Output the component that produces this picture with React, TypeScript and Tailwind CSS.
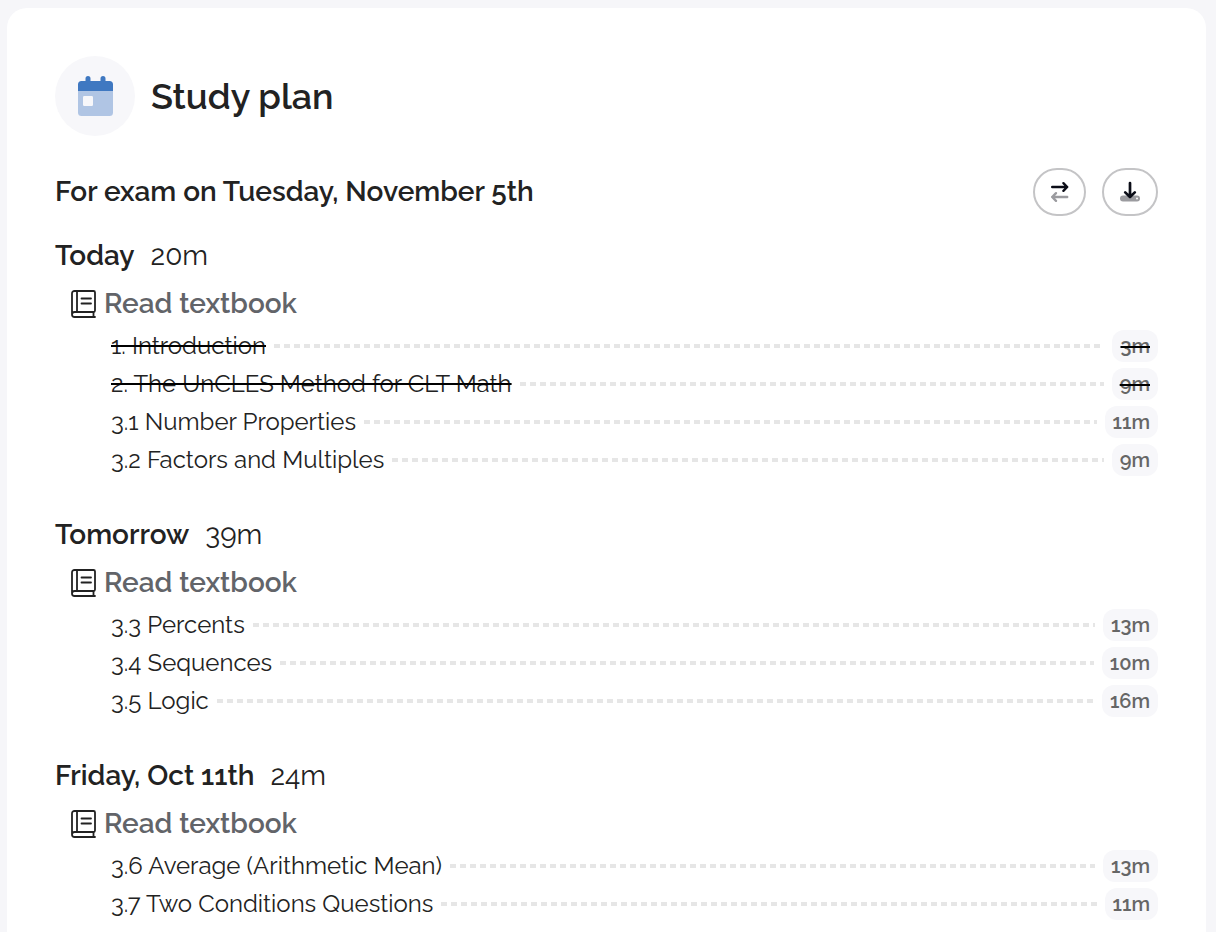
type Task = {
  name: string;
  time: string;
  done?: boolean;
};

type Day = {
  label: string;
  total: string;
  tasks: Task[];
};

const days: Day[] = [
  {
    label: "Today",
    total: "20m",
    tasks: [
      { name: "1. Introduction", time: "3m", done: true },
      { name: "2. The UnCLES Method for CLT Math", time: "9m", done: true },
      { name: "3.1 Number Properties", time: "11m" },
      { name: "3.2 Factors and Multiples", time: "9m" },
    ],
  },
  {
    label: "Tomorrow",
    total: "39m",
    tasks: [
      { name: "3.3 Percents", time: "13m" },
      { name: "3.4 Sequences", time: "10m" },
      { name: "3.5 Logic", time: "16m" },
    ],
  },
  {
    label: "Friday, Oct 11th",
    total: "24m",
    tasks: [
      { name: "3.6 Average (Arithmetic Mean)", time: "13m" },
      { name: "3.7 Two Conditions Questions", time: "11m" },
    ],
  },
];

function CalendarIcon() {
  return (
    <svg width="36" height="40" viewBox="-1 0 36 40" aria-hidden="true">
      <path d="M0 15h35v21.5a3.5 3.5 0 0 1-3.5 3.5h-28A3.5 3.5 0 0 1 0 36.5z" fill="#b0c5e4" />
      <path
        d="M10 0a2.5 2.5 0 0 1 2.5 2.5V5h10V2.5a2.5 2.5 0 0 1 5 0V5h4A3.5 3.5 0 0 1 35 8.5V15H0V8.5A3.5 3.5 0 0 1 3.5 5h4V2.5A2.5 2.5 0 0 1 10 0z"
        fill="#3f78c1"
      />
      <rect x="5" y="20" width="10" height="10" rx="1.2" fill="#f7f7fa" />
    </svg>
  );
}

function SwapIcon() {
  return (
    <svg
      width="20"
      height="22"
      viewBox="0 0 20 22"
      fill="none"
      strokeWidth="2.4"
      strokeLinecap="round"
      strokeLinejoin="round"
      aria-hidden="true"
    >
      <path d="M6 12.2L2.2 16 6 19.8M2.2 16h15" stroke="#9b9b9f" />
      <path d="M2.2 6h15M13.4 2.2L17.2 6l-3.8 3.8" stroke="#0b0d17" />
    </svg>
  );
}

function DownloadIcon() {
  return (
    <svg width="20" height="22" viewBox="0 0 20 22" fill="none" aria-hidden="true">
      <path d="M3 14.5h14a3 3 0 0 1 0 6H3a3 3 0 0 1 0-6z" fill="#9b9b9f" />
      <circle cx="17" cy="17.5" r="1" fill="#fff" />
      <path
        d="M10 2v14M5.2 11.4L10 16l4.8-4.6"
        stroke="#0b0d17"
        strokeWidth="2.7"
        strokeLinecap="round"
        strokeLinejoin="round"
      />
    </svg>
  );
}

function BookIcon() {
  return (
    <svg
      width="25"
      height="28"
      viewBox="0 0 25 28"
      fill="none"
      stroke="#222"
      strokeWidth="1.8"
      strokeLinecap="round"
      strokeLinejoin="round"
      aria-hidden="true"
    >
      <path d="M1 24.5v-21A2.5 2.5 0 0 1 3.500 1h19A1.500 1.500 0 0 1 24 2.500v18a1.500 1.500 0 0 1-1.500 1.500h-19a2.500 2.500 0 0 0 0 5H24" />
      <path d="M6 1v21M22.5 22v5M10.5 8.500H20M10.5 13.500H20" />
    </svg>
  );
}

function TaskRow({ task }: { task: Task }) {
  return (
    <li className="flex h-[38px] items-center gap-2">
      <span
        className={
          task.done
            ? "text-2xl line-through decoration-black decoration-2"
            : "text-2xl"
        }
      >
        {task.name}
      </span>
      <span className="h-1 flex-1 bg-[repeating-linear-gradient(to_right,#e6e6e6_0_6px,transparent_6px_10px)]" />
      <span className="flex h-8 items-center rounded-xl bg-[#f7f7fa] px-2 text-xl font-semibold text-[#666]">
        <span
          className={
            task.done ? "line-through decoration-black decoration-2" : ""
          }
        >
          {task.time}
        </span>
      </span>
    </li>
  );
}

function DaySection({ day }: { day: Day }) {
  return (
    <section>
      <h3 className="flex h-12 items-center gap-4 text-[28px]">
        <span className="font-semibold">{day.label}</span>
        <span>{day.total}</span>
      </h3>
      <h4 className="flex h-12 items-center gap-2 pl-4 text-[28px] font-semibold text-[#626469]">
        <BookIcon />
        Read textbook
      </h4>
      <ul className="-mt-px pl-14">
        {day.tasks.map((task) => (
          <TaskRow key={task.name} task={task} />
        ))}
      </ul>
    </section>
  );
}

export default function App() {
  return (
    <div className="min-h-screen bg-[#f6f6f9] pt-2 pr-[10px] pl-[7px] font-[Raleway,sans-serif] text-[#222]">
      <main className="rounded-t-[20px] bg-white p-12">
        <header className="flex items-center gap-4">
          <div className="flex size-20 items-center justify-center rounded-full bg-[#f7f7fa]">
            <CalendarIcon />
          </div>
          <h1 className="text-4xl font-semibold">Study plan</h1>
        </header>

        <div className="mt-8 mb-4 flex h-12 items-center justify-between">
          <h2 className="text-[28px] font-semibold">
            For exam on Tuesday, November 5th
          </h2>
          <div className="flex gap-4">
            <button
              type="button"
              aria-label="Reschedule"
              className="flex h-12 w-[53px] items-center justify-center rounded-3xl border-2 border-[#c4c4c6]"
            >
              <SwapIcon />
            </button>
            <button
              type="button"
              aria-label="Download"
              className="flex h-12 w-14 items-center justify-center rounded-3xl border-2 border-[#c4c4c6]"
            >
              <DownloadIcon />
            </button>
          </div>
        </div>

        <div className="flex flex-col gap-8">
          {days.map((day) => (
            <DaySection key={day.label} day={day} />
          ))}
        </div>
      </main>
    </div>
  );
}
